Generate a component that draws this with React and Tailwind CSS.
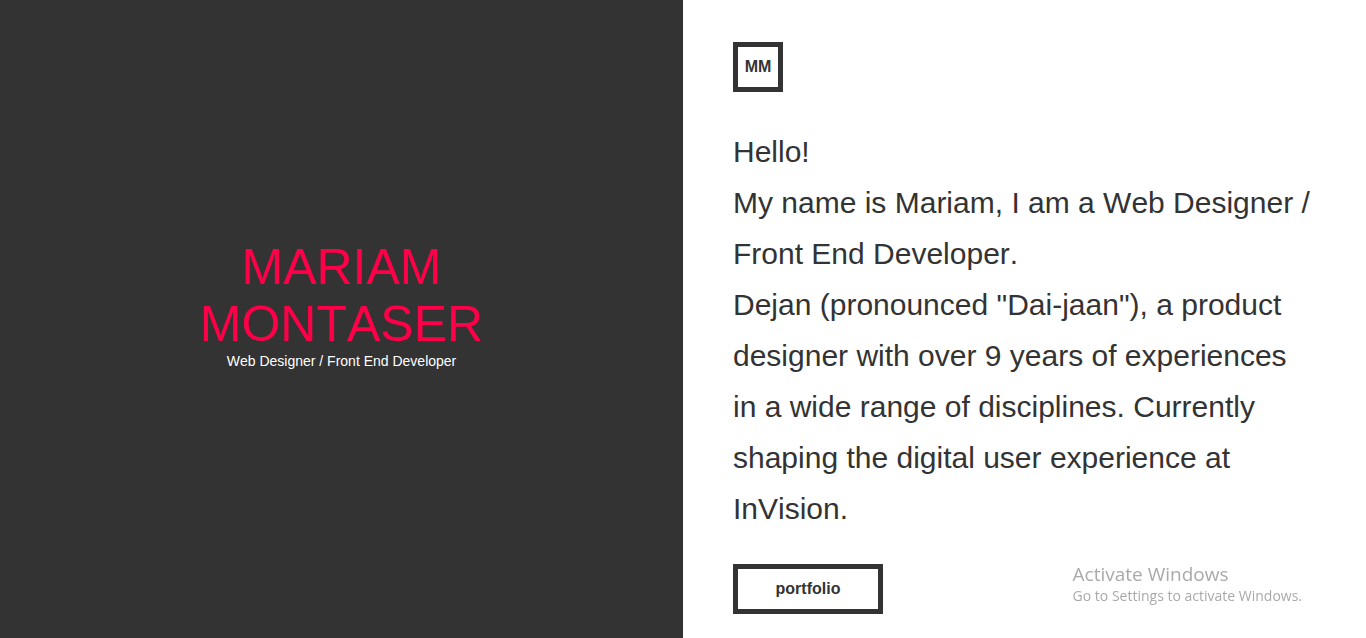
export default function App() {
  return (
    <main className="grid min-h-screen grid-cols-2 bg-white font-['Liberation_Sans',Arial,sans-serif] text-[#333] [font-kerning:none]">
      <section className="flex flex-col items-center justify-center bg-[#333] pb-[30px] text-center">
        <h1 className="w-72 text-[50px] leading-[57px] text-[#ff0048] uppercase">Mariam Montaser</h1>
        <p className="text-sm leading-4 text-white">Web Designer / Front End Developer</p>
      </section>
      <section className="px-[50px] pt-[42px] pb-6">
        <a href="#home" className="flex size-[50px] items-center justify-center border-[5px] border-[#333] text-base font-bold">MM</a>
        <div className="mt-[34px] text-[30px] leading-[51px]">
          <p>Hello!</p>
          <p>My name is Mariam, I am a Web Designer / Front End Developer.</p>
          <p>Dejan (pronounced "Dai-jaan"), a product designer with over 9 years of experiences in a wide range of disciplines. Currently shaping the digital user experience at InVision.</p>
        </div>
        <a href="#portfolio" className="mt-[30px] flex h-[50px] w-[150px] items-center justify-center border-[5px] border-[#333] text-base font-bold">portfolio</a>
      </section>
      <aside className="pointer-events-none fixed right-16 bottom-8 font-['Open_Sans',sans-serif] text-[#aaa] [font-kerning:auto]">
        <p className="text-[19px] leading-6">Activate Windows</p>
        <p className="text-sm leading-5">Go to Settings to activate Windows.</p>
      </aside>
    </main>
  );
}
